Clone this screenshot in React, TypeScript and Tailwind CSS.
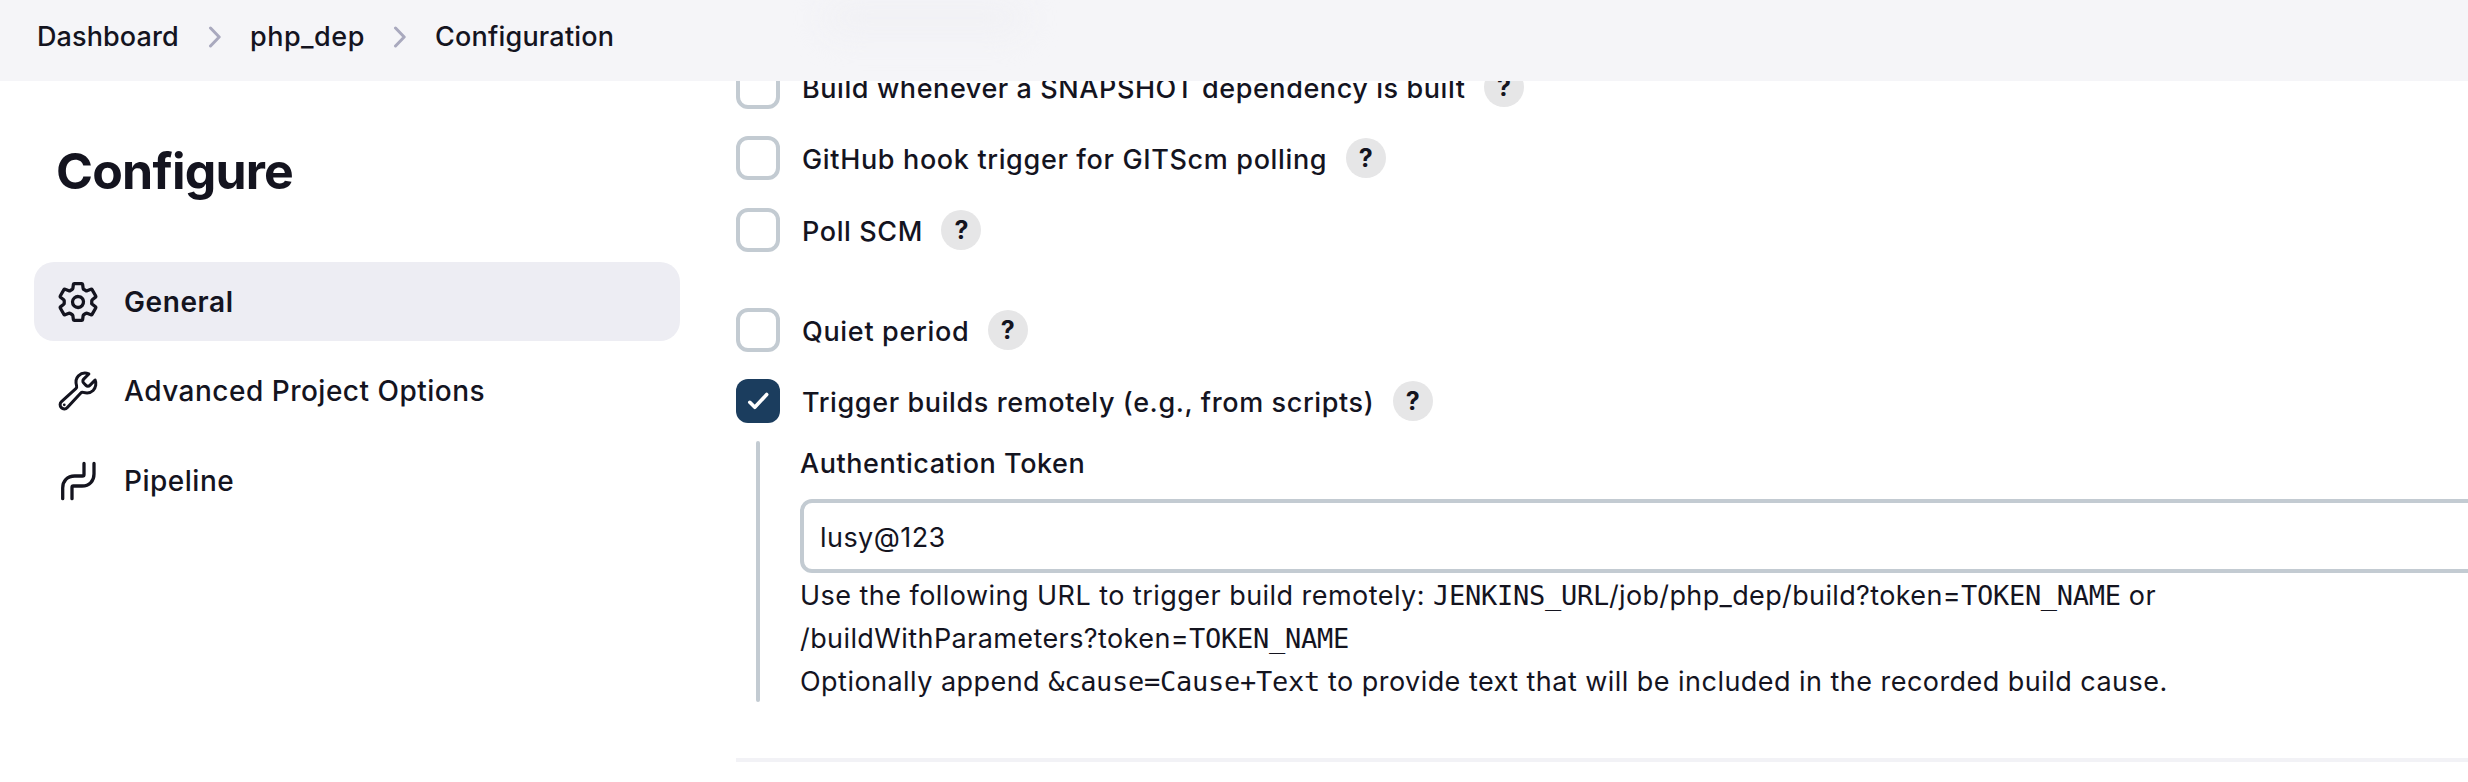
import React from "react";
import { IoBuildOutline, IoSettingsOutline } from "react-icons/io5";

function Chevron({ className }: { className: string }) {
  return (
    <svg className={className} width="14" height="22" viewBox="0 0 14 22" fill="none">
      <path d="M2.5 2L11.2 11L2.5 20" stroke="#a9a9be" strokeWidth="3" strokeLinecap="round" strokeLinejoin="round" />
    </svg>
  );
}

function PipelineIcon() {
  return (
    <svg width="44" height="44" viewBox="0 0 44 44" fill="none" stroke="#14141f" strokeWidth="3.3" strokeLinecap="round" strokeLinejoin="round">
      <path d="M6.7 39.7V29c0-7 4.500-12 12-12h7.700q1.600 0 1.600-1.600V4.500" />
      <path d="M38 4.500V15c0 7-4.500 12-12 12h-8.700q-1.300 0-1.300 1.600v11.100" />
    </svg>
  );
}

function Help() {
  return (
    <span className="ml-[18.5px] flex size-10 items-center justify-center rounded-full bg-[#e6e6e7] text-[25px] leading-10 font-bold">
      ?
    </span>
  );
}

type OptionProps = { label: string; className: string; spacing: string; checked?: boolean };

function Option({ label, className, spacing, checked = false }: OptionProps) {
  return (
    <div className={`flex h-11 items-center ${className}`}>
      {checked ? (
        <span className="size-11 rounded-xl bg-[#1b3d5e]">
          <svg width="44" height="44" viewBox="0 0 44 44" fill="none">
            <path d="M13.800 23.300L18.800 28.300L30.700 15.500" stroke="#fff" strokeWidth="3.600" strokeLinecap="round" strokeLinejoin="round" />
          </svg>
        </span>
      ) : (
        <span className="size-11 rounded-xl border-4 border-[#c3cbd2] bg-white" />
      )}
      <span className={`ml-[22px] pt-[3px] text-[27px] leading-10 font-medium whitespace-nowrap ${spacing}`}>{label}</span>
      <Help />
    </div>
  );
}

function Mono({ children }: { children: React.ReactNode }) {
  return <code className="font-['DejaVu_Sans_Mono',monospace] text-[27px] tracking-[-0.27px]">{children}</code>;
}

export default function App() {
  return (
    <div className="flex h-[782px] w-full flex-col overflow-hidden bg-white font-['Inter',sans-serif] text-[#14141f]">
      <header className="relative z-10 h-[81px] shrink-0 overflow-hidden bg-[#f5f5f8]">
        <div className="absolute top-1 left-[825px] h-7 w-[200px] rounded-full bg-[#f0f0f4] blur-[16px]" />
        <nav className="relative flex h-[74px] items-center pl-[37px] text-[27px] font-medium">
          <span className="w-[171px] tracking-[0.1px]">Dashboard</span>
          <Chevron className="mr-[28px]" />
          <span className="w-[143px] tracking-[0.5px]">php_dep</span>
          <Chevron className="mr-[28px]" />
          <span className="tracking-[0.2px]">Configuration</span>
        </nav>
      </header>

      <div className="flex flex-1">
        <aside className="w-[736px] shrink-0 pt-[60px] pl-[34px]">
          <h1 className="pl-[22px] text-[50px] leading-[60px] font-bold tracking-[-0.8px]">Configure</h1>
          <ul className="mt-[61px] flex w-[646px] flex-col gap-[10.5px] text-[28px] font-medium">
            <li className="flex h-[79px] items-center rounded-[20px] bg-[#ededf3] pl-[22px] font-semibold">
              <IoSettingsOutline size={44} className="[&_*]:[stroke-width:38px]" />
              <span className="ml-6 tracking-[0.6px]">General</span>
            </li>
            <li className="flex h-[79px] items-center pl-[22px]">
              <IoBuildOutline size={44} className="[&>path:first-child]:[stroke-width:35px]" />
              <span className="ml-6 tracking-[0.5px]">Advanced Project Options</span>
            </li>
            <li className="flex h-[79px] items-center pl-[22px]">
              <PipelineIcon />
              <span className="ml-6 tracking-[0.5px]">Pipeline</span>
            </li>
          </ul>
        </aside>

        <main className="-mt-4 min-w-0 flex-1">
          <Option label="Build whenever a SNAPSHOT dependency is built" className="" spacing="tracking-[0.57px]" />
          <Option label="GitHub hook trigger for GITScm polling" className="mt-[27px]" spacing="tracking-[0.65px]" />
          <Option label="Poll SCM" className="mt-7" spacing="tracking-[0.6px]" />
          <Option label="Quiet period" className="mt-14" spacing="tracking-[0.68px]" />
          <Option label="Trigger builds remotely (e.g., from scripts)" className="mt-[27px]" spacing="tracking-[0.61px]" checked />

          <div className="mt-[18px] flex h-[261px] pl-5">
            <div className="w-1 shrink-0 rounded-full bg-[#c3cbd2]" />
            <div className="ml-10 min-w-0 flex-1">
              <label className="block pt-[3px] text-[27px] leading-10 font-medium tracking-[0.55px]">Authentication Token</label>
              <div className="mt-[15px] -mr-8 flex h-[74px] items-center rounded-xl border-4 border-[#c3cbd2] bg-white pl-4 text-[27px] tracking-[0.45px]">
                <span className="pt-1">lusy@123</span>
              </div>
              <div className="mt-px text-[27px] leading-[43px] tracking-[0.46px] whitespace-nowrap">
                <p>
                  Use the following URL to trigger build remotely: <Mono>JENKINS_URL</Mono>
                  <span className="tracking-[0.36px]">/job/php_dep/build?token=</span>
                  <Mono>TOKEN_NAME</Mono> or
                </p>
                <p>
                  <span className="tracking-[0.41px]">/buildWithParameters?token=</span>
                  <Mono>TOKEN_NAME</Mono>
                </p>
                <p>
                  Optionally append <Mono>&amp;cause=Cause+Text</Mono> to provide text that will be included in the recorded build cause.
                </p>
              </div>
            </div>
          </div>
          <hr className="mt-14 h-1 border-0 bg-[#f2f2f6]" />
        </main>
      </div>
    </div>
  );
}
